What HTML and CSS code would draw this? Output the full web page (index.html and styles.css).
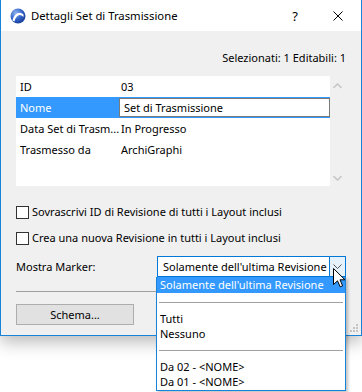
FILE: index.html
```html
<!DOCTYPE html>
<html lang="it">
<head>
  <meta charset="UTF-8" />
  <title>Dettagli Set di Trasmissione</title>
  <link rel="stylesheet" href="styles.css">
</head>
<body>
  <div class="window">
    <div class="titlebar">
      <svg class="app-icon" width="16" height="16" viewBox="0 0 16 16">
        <defs>
          <radialGradient id="ball" cx="35%" cy="30%" r="75%">
            <stop offset="0" stop-color="#8fb4f0"/>
            <stop offset="0.6" stop-color="#2d5fc4"/>
            <stop offset="1" stop-color="#1b3f95"/>
          </radialGradient>
        </defs>
        <circle cx="8" cy="8" r="7.5" fill="url(#ball)"/>
        <path d="M2.5 12.5 C4 6 9 2.5 13.5 6.5 L13.5 9 C10 5 6 7 4.5 13.5 Z" fill="#fff"/>
      </svg>
      <span class="title">Dettagli Set di Trasmissione</span>
      <span class="title-btn help">?</span>
      <span class="title-btn close">
        <svg width="10" height="10" viewBox="0 0 10 10"><path d="M0.5 0.5 L9.5 9.5 M9.5 0.5 L0.5 9.5" stroke="#000" stroke-width="1"/></svg>
      </span>
    </div>

    <div class="content">
      <div class="counts">Selezionati: 1 Editabili: 1</div>

      <div class="list-wrap">
        <div class="list">
          <div class="row"><span class="key">ID</span><span class="val">03</span></div>
          <div class="row selected"><span class="key">Nome</span><span class="val edit">Set di Trasmissione</span></div>
          <div class="row"><span class="key">Data Set di Trasm...</span><span class="val">In Progresso</span></div>
          <div class="row"><span class="key">Trasmesso da</span><span class="val">ArchiGraphi</span></div>
        </div>
        <div class="scrollbar">
          <svg width="9" height="6" viewBox="0 0 9 6"><path d="M0.5 5 L4.5 1 L8.5 5" fill="none" stroke="#c8c8c8" stroke-width="1.6"/></svg>
          <svg width="9" height="6" viewBox="0 0 9 6"><path d="M0.5 1 L4.5 5 L8.5 1" fill="none" stroke="#c8c8c8" stroke-width="1.6"/></svg>
        </div>
      </div>

      <label class="check"><span class="box"></span>Sovrascrivi ID di Revisione di tutti i Layout inclusi</label>
      <label class="check second"><span class="box"></span>Crea una nuova Revisione in tutti i Layout inclusi</label>

      <div class="marker-row">
        <span class="marker-label">Mostra Marker:</span>
        <div class="select">
          <span class="select-text">Solamente dell'ultima Revisione</span>
          <span class="select-btn">
            <svg width="9" height="5" viewBox="0 0 9 5"><path d="M0.5 0.5 L4.5 4.5 L8.5 0.5" fill="none" stroke="#555" stroke-width="1"/></svg>
          </span>
        </div>
      </div>

      <div class="separator"></div>

      <button class="schema">Schema...</button>
    </div>

    <svg class="grip" width="8" height="8" viewBox="0 0 8 8" fill="#c4c4c4">
      <rect x="6" y="0" width="2" height="2"/>
      <rect x="3" y="3" width="2" height="2"/><rect x="6" y="3" width="2" height="2"/>
      <rect x="0" y="6" width="2" height="2"/><rect x="3" y="6" width="2" height="2"/><rect x="6" y="6" width="2" height="2"/>
    </svg>
  </div>

  <div class="popup">
    <div class="opt active">Solamente dell'ultima Revisione</div>
    <div class="opt-sep"></div>
    <div class="opt">Tutti</div>
    <div class="opt">Nessuno</div>
    <div class="opt-sep"></div>
    <div class="opt">Da 02 - &lt;NOME&gt;</div>
    <div class="opt">Da 01 - &lt;NOME&gt;</div>
  </div>

  <svg class="cursor" width="13" height="20" viewBox="0 0 13 20">
    <path d="M0.5 0.5 L0.5 16.5 L4.5 12.8 L7.2 18.8 L9.6 17.8 L7 11.8 L12 11.8 Z" fill="#fff" stroke="#000" stroke-width="1" stroke-linejoin="miter"/>
  </svg>
</body>
</html>
```

FILE: styles.css
```css
body { margin: 0; background: #fff; font-family: "Noto Sans", sans-serif; font-size: 11px; color: #000; position: relative; width: 362px; height: 392px; overflow: hidden; }

.window { width: 362px; height: 336px; box-sizing: border-box; border: 1px solid #1883d7; border-top: none; background: #f0f0f0; box-shadow: 0 6px 16px rgba(0,0,0,0.28); position: relative; }

.titlebar { height: 31px; background: #fff; display: flex; align-items: center; }
.app-icon { margin-left: 9px; margin-right: 5px; }
.title { flex: 1; font-size: 11.3px; }
.title-btn { display: flex; align-items: center; justify-content: center; }
.help { width: 20px; margin-right: 25px; font-size: 13px; }
.close { width: 16px; margin-right: 15px; }

.content { padding: 0 15px; }

.counts { text-align: right; line-height: 16px; padding-top: 19px; }

.list-wrap { display: flex; margin-top: 10px; height: 110px; }
.list { width: 314px; background: #fff; }
.row { display: flex; height: 21px; line-height: 21px; }
.key { width: 99px; padding-left: 4px; white-space: nowrap; overflow: hidden; }
.val { flex: 1; padding-left: 2px; }
.row.selected { background: #3399ff; }
.row.selected .key { color: #fff; }
.val.edit { background: #fff; border: 1px solid #7a7a7a; height: 17px; line-height: 17px; margin: 1px 0 2px 0; padding-left: 4px; }
.scrollbar { width: 15px; display: flex; flex-direction: column; justify-content: space-between; align-items: center; padding: 7px 0 5px; box-sizing: border-box; }

.check { display: flex; align-items: center; height: 16px; line-height: 16px; margin-top: 18px; }
.check.second { margin-top: 10px; }
.box { width: 11px; height: 11px; border: 1px solid #333; background: #fff; margin-right: 3px; }

.marker-row { display: flex; align-items: center; justify-content: space-between; margin-top: 10px; }
.select { width: 189px; height: 21px; box-sizing: border-box; border: 1px solid #0078d7; background: #fff; display: flex; }
.select-text { flex: 1; padding-left: 5px; line-height: 19px; white-space: nowrap; overflow: hidden; }
.select-btn { width: 15px; background: #e5f1fb; border-left: 1px solid #0078d7; display: flex; align-items: center; justify-content: center; }

.separator { height: 1px; background: #a0a0a0; margin-top: 14px; }

.schema { margin-top: 12px; width: 118px; height: 21px; background: #e1e1e1; border: 1px solid #adadad; font-family: inherit; font-size: 11px; padding: 0; }

.grip { position: absolute; right: 3px; bottom: 3px; }

.popup { position: absolute; left: 156px; top: 277px; width: 190px; box-sizing: border-box; border: 1px solid #1883d7; border-top: none; background: #fff; box-shadow: 2px 2px 3px rgba(0,0,0,0.25); padding-bottom: 1px; }
.opt { height: 15px; line-height: 15px; padding-left: 3px; white-space: nowrap; }
.opt.active { height: 16px; line-height: 16px; background: #3399ff; color: #fff; }
.opt-sep { height: 18px; display: flex; align-items: center; padding: 0 2px; }
.opt-sep::before { content: ""; flex: 1; height: 1px; background: #a0a0a0; }

.cursor { position: absolute; left: 333px; top: 268px; }
```
